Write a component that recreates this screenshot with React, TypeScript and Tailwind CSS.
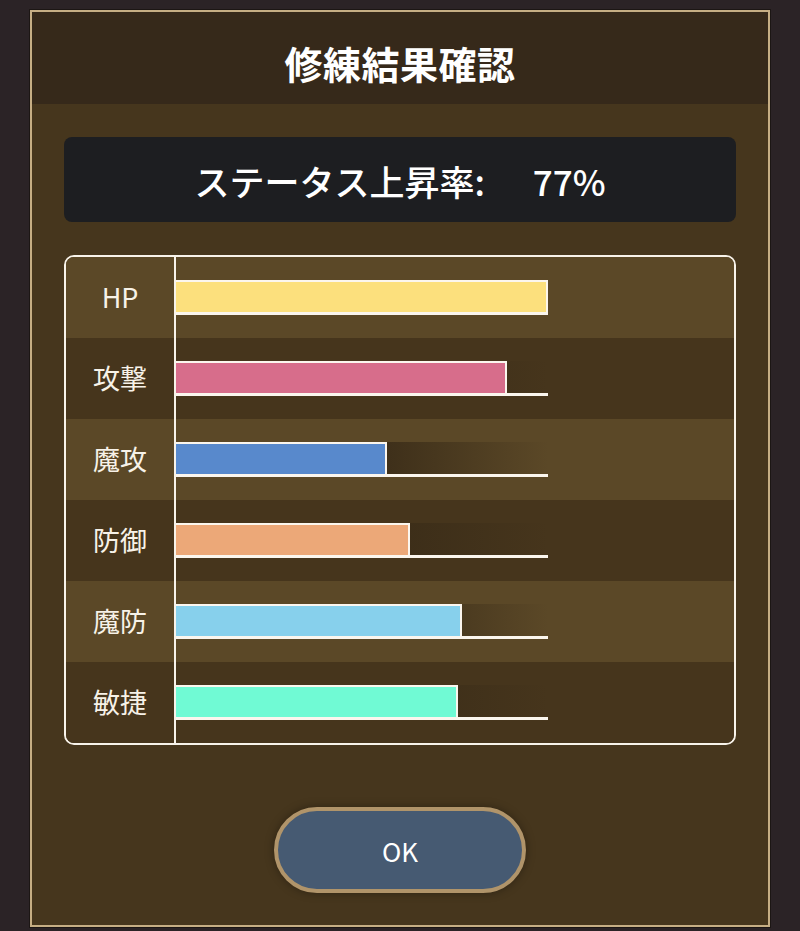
import React from 'react';

type Stat = { label: string; pct: number; color: string };

const stats: Stat[] = [
  { label: 'HP', pct: 100, color: '#fce07d' },
  { label: '攻撃', pct: 89, color: '#d76d8b' },
  { label: '魔攻', pct: 56.7, color: '#5889cc' },
  { label: '防御', pct: 63, color: '#eca878' },
  { label: '魔防', pct: 76.9, color: '#87d0ec' },
  { label: '敏捷', pct: 75.8, color: '#70fad4' },
];

const font = { fontFamily: '"Noto Sans CJK JP", "Noto Sans", sans-serif' };

const StatRow = ({ stat, index }: { stat: Stat; index: number }) => {
  const light = index % 2 === 0;
  return (
    <div className={`flex h-[81px] ${light ? 'bg-[#5b4827]' : 'bg-[#46351c]'}`}>
      <div className="w-[110px] flex items-center justify-center text-[27px] text-[#f7f2e8] border-r-2 border-[#f8f3ea]">
        {stat.label}
      </div>
      <div className="flex-1 flex items-center">
        {/* track */}
        <div className="relative w-[372px] h-[35px] border-b-[3px] border-[#fbf6ee] bg-gradient-to-r from-[#2c2113] via-[#3a2c18] to-transparent">
          <div
            className="h-full border-t-2 border-r-2 border-[#fbf6ee]"
            style={{ width: `${stat.pct}%`, backgroundColor: stat.color }}
          />
        </div>
      </div>
    </div>
  );
};

const App = () => {
  return (
    <div className="w-[800px] h-[931px] bg-[#2b2326] pt-[10px] px-[30px]" style={font}>
      <div className="h-[917px] border-2 border-[#c6ae84] bg-[#46361d] flex flex-col shadow-[0_0_0_1px_#1c1614]">
        {/* Header */}
        <div className="h-[92px] bg-[#36291a] flex items-center justify-center pt-[9px]">
          <h1 className="text-[38px] font-bold text-white tracking-[0.5px]">修練結果確認</h1>
        </div>

        <div className="flex-1 px-[32px] pt-[33px] flex flex-col">
          {/* Rate box */}
          <div className="h-[85px] rounded-lg bg-[#1d1e21] flex items-center justify-center pt-[3px] text-[35px] font-medium text-white">
            <span>ステータス上昇率:</span>
            <span className="ml-[48px]">77%</span>
          </div>

          {/* Stats table */}
          <div className="mt-[33px] rounded-[10px] border-2 border-[#f8f3ea] overflow-hidden">
            {stats.map((s, i) => (
              <StatRow key={s.label} stat={s} index={i} />
            ))}
          </div>

          {/* OK */}
          <div className="flex justify-center mt-[62px]">
            <button className="w-[252px] h-[86px] rounded-full border-[4px] border-[#b0946a] bg-[#465a72] text-white text-[26px] shadow-[0_0_10px_rgba(0,0,0,0.35)]">
              OK
            </button>
          </div>
        </div>
      </div>
    </div>
  );
};

export default App;
